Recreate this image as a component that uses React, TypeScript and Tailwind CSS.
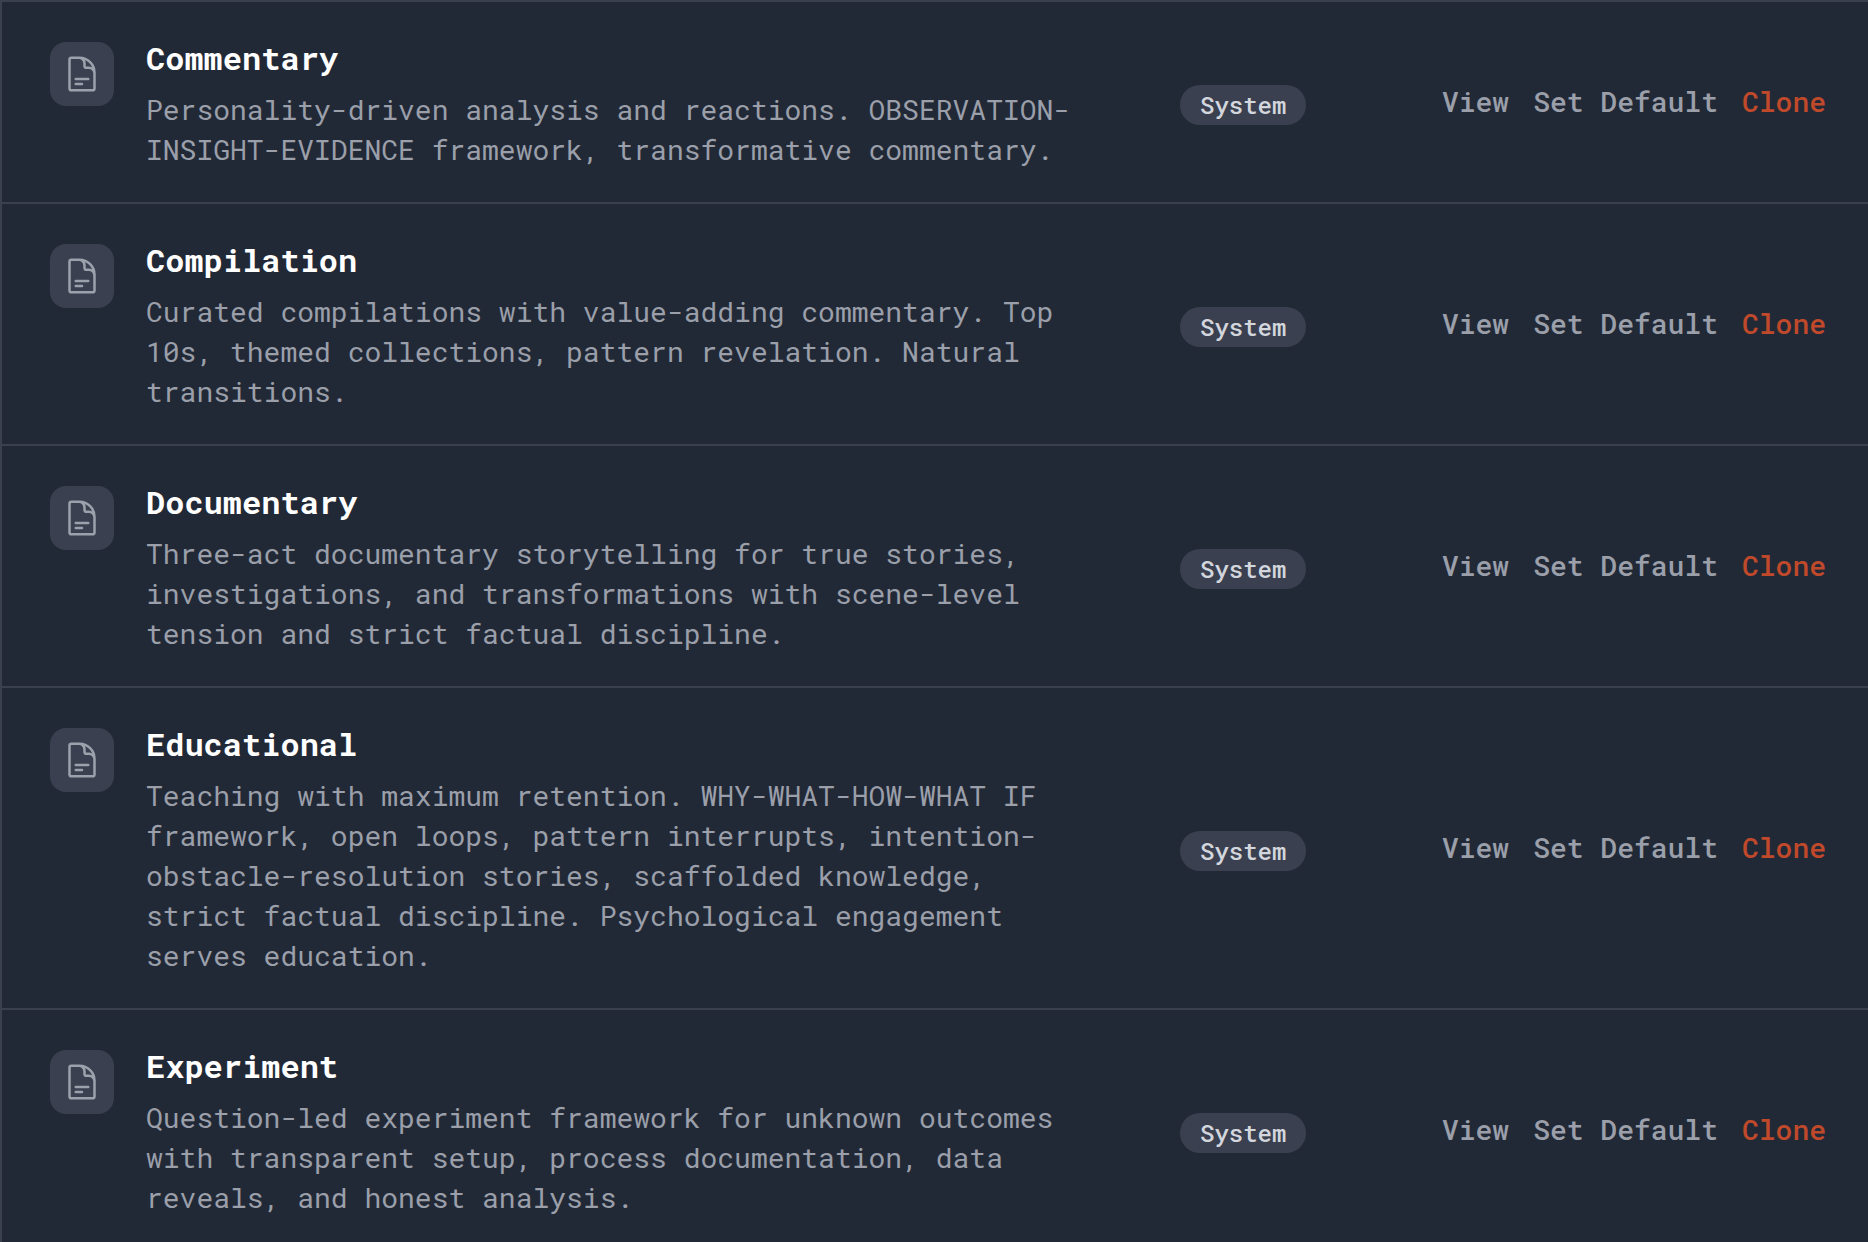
interface Style {
	id: string;
	name: string;
	description: string;
}

const styles: Style[] = [
	{
		id: "commentary",
		name: "Commentary",
		description:
			"Personality-driven analysis and reactions. OBSERVATION-INSIGHT-EVIDENCE framework, transformative commentary.",
	},
	{
		id: "compilation",
		name: "Compilation",
		description:
			"Curated compilations with value-adding commentary. Top 10s, themed collections, pattern revelation. Natural transitions.",
	},
	{
		id: "documentary",
		name: "Documentary",
		description:
			"Three-act documentary storytelling for true stories, investigations, and transformations with scene-level tension and strict factual discipline.",
	},
	{
		id: "educational",
		name: "Educational",
		description:
			"Teaching with maximum retention. WHY-WHAT-HOW-WHAT IF framework, open loops, pattern interrupts, intention-obstacle-resolution stories, scaffolded knowledge, strict factual discipline. Psychological engagement serves education.",
	},
	{
		id: "experiment",
		name: "Experiment",
		description:
			"Question-led experiment framework for unknown outcomes with transparent setup, process documentation, data reveals, and honest analysis.",
	},
];

function DocumentIcon() {
	return (
		<svg
			className="size-10"
			viewBox="0 0 24 24"
			fill="none"
			stroke="currentColor"
			strokeWidth={1.5}
			strokeLinecap="round"
			strokeLinejoin="round"
			aria-hidden="true"
		>
			<path d="M19.5 14.25v-2.625a3.375 3.375 0 0 0-3.375-3.375h-1.5A1.125 1.125 0 0 1 13.5 7.125v-1.5a3.375 3.375 0 0 0-3.375-3.375H8.25m0 12.75h7.5m-7.5 3H12M10.5 2.25H5.625c-.621 0-1.125.504-1.125 1.125v17.25c0 .621.504 1.125 1.125 1.125h12.75c.621 0 1.125-.504 1.125-1.125V11.25a9 9 0 0 0-9-9Z" />
		</svg>
	);
}

function StyleRow({ style }: { style: Style }) {
	return (
		<tr className="border-[#3a404f] border-b-2">
			<td className="px-12 py-8">
				<div className="flex items-start gap-8">
					<div className="mt-2 flex size-16 shrink-0 items-center justify-center rounded-2xl bg-[#3a4050] text-[#9ca1ac]">
						<DocumentIcon />
					</div>
					<div className="min-w-0">
						<div className="font-bold text-[32px] text-white leading-12">
							{style.name}
						</div>
						<p className="mt-2 leading-10">{style.description}</p>
					</div>
				</div>
			</td>
			<td className="px-12 py-8 align-middle text-[32px] leading-12">
				<span className="inline-block rounded-full bg-[#3a4050] px-5 py-1 font-medium text-2xl text-[#d3d6dc] leading-8">
					System
				</span>
			</td>
			<td className="py-8 pr-[42px] pl-12 align-middle">
				<div className="flex items-center justify-end gap-6 whitespace-nowrap font-medium">
					<button type="button" className="hover:text-white">
						View
					</button>
					<button type="button" className="hover:text-white">
						Set Default
					</button>
					<button type="button" className="text-[#c0492b]">
						Clone
					</button>
				</div>
			</td>
		</tr>
	);
}

export default function App() {
	return (
		<div className="h-screen overflow-hidden border-[#3a404f] border-t-2 border-l-2 bg-[#222936] font-['Roboto_Mono','Liberation_Mono',monospace] text-[#9a9faa] text-[28px] leading-10">
			<table className="w-full table-fixed border-collapse text-left">
				<colgroup>
					<col />
					<col className="w-[262px]" />
					<col className="w-[474px]" />
				</colgroup>
				<tbody>
					{styles.map((style) => (
						<StyleRow key={style.id} style={style} />
					))}
				</tbody>
			</table>
		</div>
	);
}
